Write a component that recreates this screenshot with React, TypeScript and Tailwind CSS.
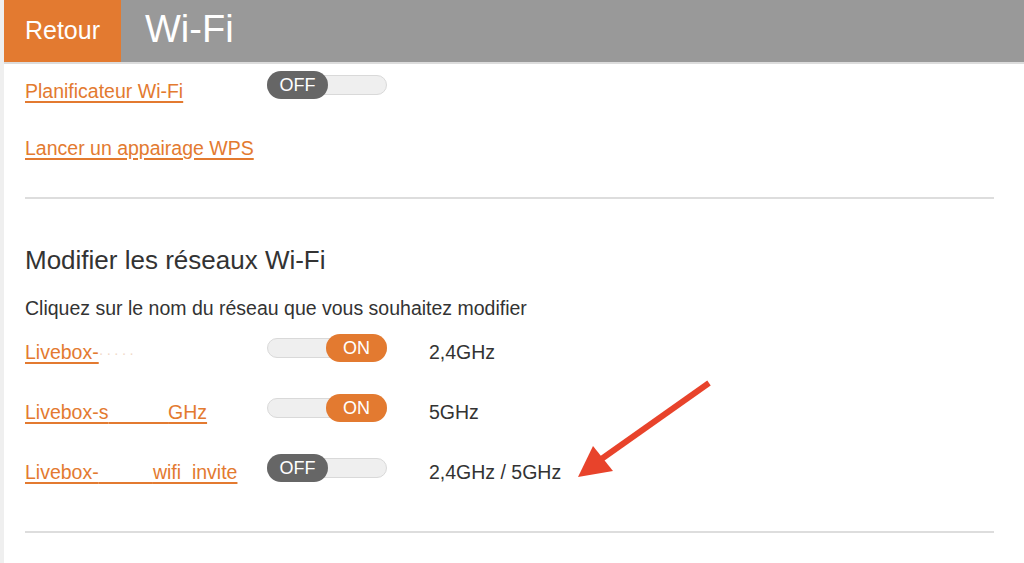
import React from "react";

const font = "font-['Liberation_Sans',Arial,Helvetica,sans-serif]";

function Toggle({ on, className = "" }: { on: boolean; className?: string }) {
  return (
    <div className={`relative w-[120px] h-[28px] flex items-center shrink-0 ${className}`}>
      <div className="w-full h-[20px] rounded-full bg-[#efefef] border border-[#d9d9d9]" />
      <div
        className={`absolute top-0 ${on ? "right-0 bg-[#e37a30]" : "left-0 bg-[#666666]"} w-[61px] h-[28px] rounded-full flex items-center justify-center text-white text-[18px] leading-none`}
      >
        {on ? "ON" : "OFF"}
      </div>
    </div>
  );
}

const link = "text-[#e37a30] underline underline-offset-[3px] decoration-[1.5px] text-[19.5px] leading-none";

const networks = [
  { pre: "Livebox-", hidden: "", tail: "", dots: true, on: true, band: "2,4GHz" },
  { pre: "Livebox-s", hidden: "\u00a0".repeat(11), tail: "GHz", dots: false, on: true, band: "5GHz" },
  { pre: "Livebox-", hidden: "\u00a0".repeat(10), tail: "wifi_invite", dots: false, on: false, band: "2,4GHz / 5GHz" },
];

export default function App() {
  return (
    <div className={`relative w-[1024px] h-[563px] bg-white flex overflow-hidden ${font}`}>
      <div className="w-[4px] bg-[#efefef] shrink-0" />
      <div className="flex-1 flex flex-col">
        <header className="h-[64px] flex border-b-2 border-[#dcdcdc] bg-[#999999]">
          <div className="w-[117px] bg-[#e37a30] flex items-center justify-center text-white text-[25px]">
            Retour
          </div>
          <h1 className="pl-[24px] flex items-center text-white text-[38px] leading-none pb-[4px]">Wi-Fi</h1>
        </header>

        <main className="pl-[21px] pr-[30px] flex flex-col">
          <div className="h-[56px] flex items-center">
            <a className={`${link} w-[242px]`}>Planificateur Wi-Fi</a>
            <Toggle on={false} className="mb-[14px]" />
          </div>
          <div className="h-[58px] flex items-center">
            <a className={link}>Lancer un appairage WPS</a>
          </div>

          <div className="mt-[19px] border-t-2 border-[#dddddd]" />

          <h2 className="mt-[46px] text-[26px] leading-[30px] text-[#333333]">Modifier les réseaux Wi-Fi</h2>
          <p className="mt-[21px] text-[19.5px] leading-[24px] text-[#333333]">
            Cliquez sur le nom du réseau que vous souhaitez modifier
          </p>

          <div className="mt-[3px] flex flex-col">
            {networks.map((n, i) => (
              <div key={i} className="h-[60px] flex items-center">
                <div className="w-[242px] flex items-center">
                  <a className={link}>
                    {n.pre}
                    {n.hidden && <span className="text-transparent">{n.hidden}</span>}
                    {n.tail}
                  </a>
                  {n.dots && <span className="text-[#f1d9c8] text-[14px] tracking-[3px]">·····</span>}
                </div>
                <Toggle on={n.on} className="mb-[10px]" />
                <span className="ml-[42px] text-[19.5px] text-[#333333]">{n.band}</span>
              </div>
            ))}
          </div>

          <div className="mt-[28px] border-t-2 border-[#dddddd]" />
        </main>
      </div>

      <svg className="absolute left-0 top-0 pointer-events-none" width="1024" height="563">
        <line x1="709" y1="383" x2="600" y2="460" stroke="#e8432b" strokeWidth="6" />
        <polygon points="578,477 593,446 613,471" fill="#e8432b" />
      </svg>
    </div>
  );
}
